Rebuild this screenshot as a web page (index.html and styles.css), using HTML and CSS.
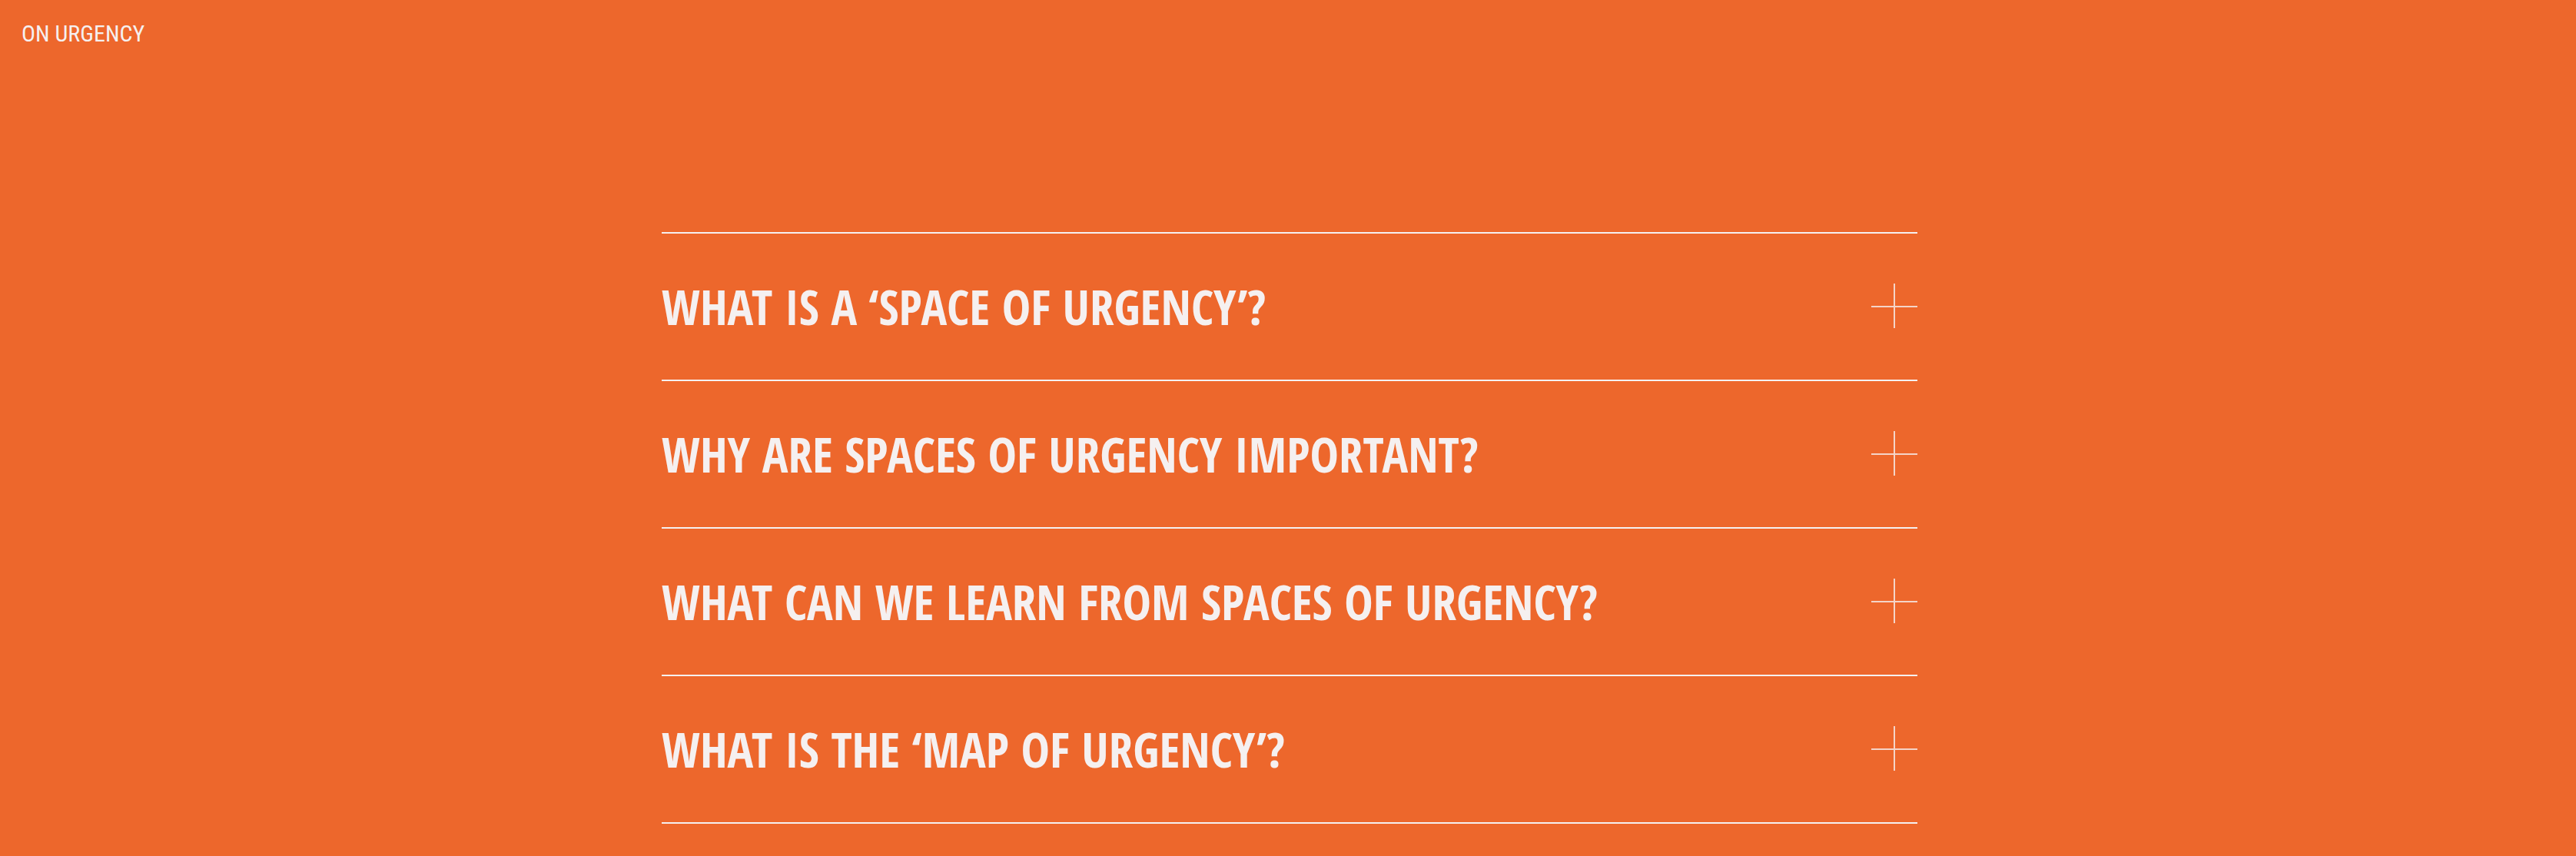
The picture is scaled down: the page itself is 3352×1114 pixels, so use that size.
FILE: index.html
```html
<!DOCTYPE html>
<html lang="en">
<head>
<meta charset="utf-8">
<meta name="viewport" content="width=device-width, initial-scale=1">
<title>On Urgency</title>
<link rel="stylesheet" href="styles.css">
</head>
<body>
<header class="site-header">
  <h1 class="page-title">ON URGENCY</h1>
</header>
<main class="faq">
  <ul class="faq-list">
    <li class="faq-item">
      <button class="faq-toggle" type="button" aria-expanded="false">
        <span class="question">WHAT IS A ‘SPACE OF URGENCY’?</span>
        <svg class="plus" viewBox="0 0 60 60" aria-hidden="true"><path d="M0 30H60M30 0V58"/></svg>
      </button>
    </li>
    <li class="faq-item">
      <button class="faq-toggle" type="button" aria-expanded="false">
        <span class="question">WHY ARE SPACES OF URGENCY IMPORTANT?</span>
        <svg class="plus" viewBox="0 0 60 60" aria-hidden="true"><path d="M0 30H60M30 0V58"/></svg>
      </button>
    </li>
    <li class="faq-item">
      <button class="faq-toggle" type="button" aria-expanded="false">
        <span class="question">WHAT CAN WE LEARN FROM SPACES OF URGENCY?</span>
        <svg class="plus" viewBox="0 0 60 60" aria-hidden="true"><path d="M0 30H60M30 0V58"/></svg>
      </button>
    </li>
    <li class="faq-item">
      <button class="faq-toggle" type="button" aria-expanded="false">
        <span class="question">WHAT IS THE ‘MAP OF URGENCY’?</span>
        <svg class="plus" viewBox="0 0 60 60" aria-hidden="true"><path d="M0 30H60M30 0V58"/></svg>
      </button>
    </li>
  </ul>
</main>
</body>
</html>
```
FILE: styles.css
```css
* {
  box-sizing: border-box;
}

body {
  margin: 0;
  background: #ed672c;
  color: #f5f0f0;
}

.site-header {
  padding: 24px 28px;
}

.page-title {
  margin: 0;
  font: 400 30px/40px "Roboto Condensed", Roboto, sans-serif;
}

.faq {
  padding: 214px 24px 40px 28px;
}

.faq-list {
  max-width: 1634px;
  margin: 0 auto;
  padding: 0;
  list-style: none;
  border-top: 2px solid;
}

.faq-item {
  border-bottom: 2px solid;
}

.faq-toggle {
  display: flex;
  align-items: center;
  justify-content: space-between;
  gap: 32px;
  width: 100%;
  min-height: 190px;
  padding: 48px 0;
  border: 0;
  background: none;
  color: inherit;
  text-align: left;
  cursor: pointer;
}

.question {
  font: 700 63px/88px "Open Sans Condensed", "Open Sans", sans-serif;
}

.plus {
  flex: none;
  width: 60px;
  height: 60px;
  fill: none;
  stroke: currentColor;
  stroke-width: 2;
  stroke-opacity: 0.8;
}
```
